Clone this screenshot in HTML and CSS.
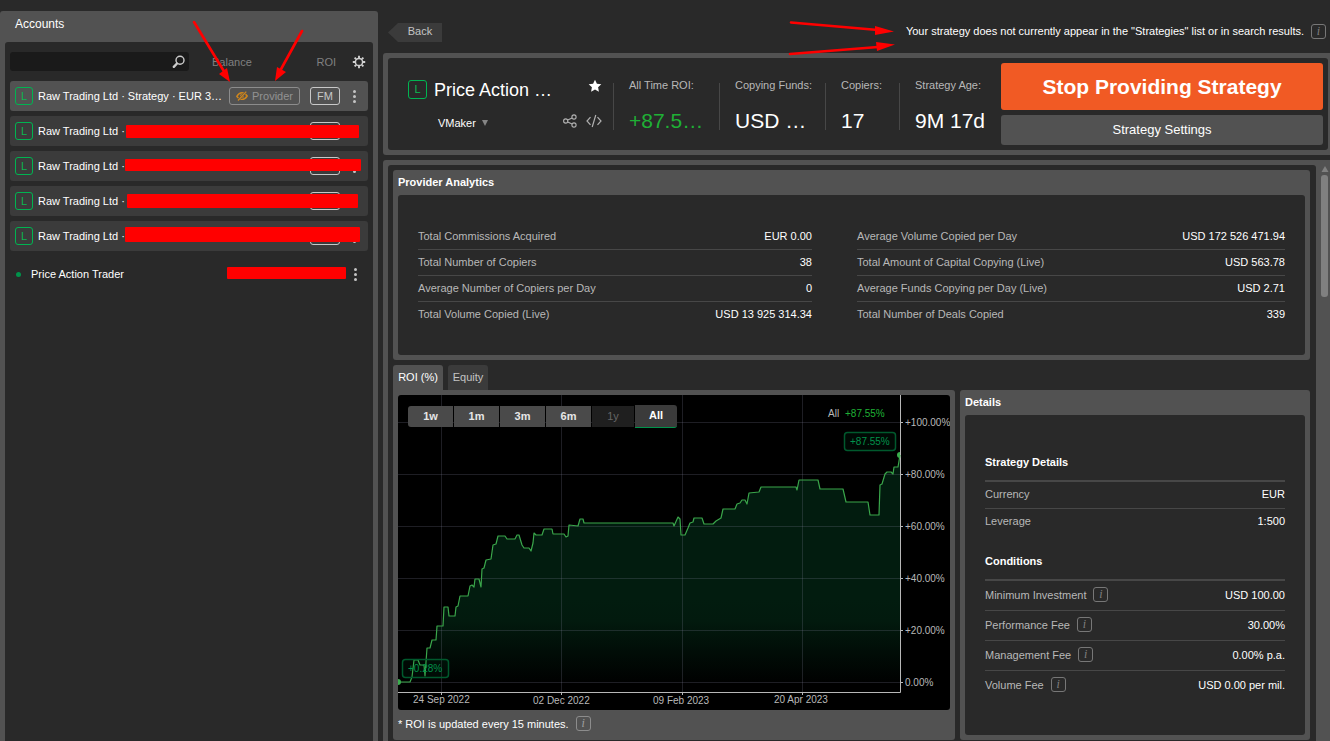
FILE: index.html
```html
<!DOCTYPE html>
<html lang="en">
<head>
<meta charset="utf-8">
<title>Strategy profile</title>
<link rel="stylesheet" href="styles.css">
</head>
<body>
<div class="app">
  <aside class="accounts">
    <h2 class="accounts-title">Accounts</h2>
    <div class="accounts-body">
      <div class="toolbar">
        <div class="search">
          <input class="search-input" type="text" aria-label="Search accounts">
          <svg class="search-icon" viewBox="0 0 14 14" aria-hidden="true"><circle cx="8" cy="5.3" r="4" fill="none" stroke="#ccc" stroke-width="1.4"/><path d="M5 8.5L1.8 11.8" stroke="#ccc" stroke-width="2.4" stroke-linecap="round"/></svg>
        </div>
        <span class="col-balance">Balance</span>
        <span class="col-roi">ROI</span>
        <button class="icon-btn" aria-label="Columns"><svg width="14" height="14" viewBox="0 0 14 14"><circle cx="7" cy="7" r="3.6" fill="none" stroke="#d0d0d0" stroke-width="1.5"/><path d="M7 3V.8M7 11v2.2M3 7H.8M11 7h2.2M4.2 4.2L2.6 2.6M9.8 4.2l1.6-1.6M4.2 9.8l-1.6 1.6M9.8 9.8l1.6 1.6" stroke="#d0d0d0" stroke-width="1.9"/></svg></button>
      </div>
      <ul class="account-list">
        <li class="account active">
          <span class="badge">L</span><span class="account-name">Raw Trading Ltd · Strategy · EUR 3…</span>
          <button class="tag provider"><svg width="12" height="10" viewBox="0 0 12 10" aria-hidden="true"><path d="M.8 5.3Q3 1.8 6 1.8T11.2 5Q9 8.4 6 8.4T.8 5.3z" fill="none" stroke="#d0861b" stroke-width="1.4"/><circle cx="6" cy="5" r="2.1" fill="#d0861b"/><path d="M1.6 9.6L10.6.5" stroke="#525252" stroke-width="2.4"/><path d="M2 9.5L10.3.6" stroke="#d0861b" stroke-width="1.3"/></svg>Provider</button>
          <button class="tag fm">FM</button>
          <button class="dots" aria-label="More"><i></i><i></i><i></i></button>
        </li>
        <li class="account"><span class="badge">L</span><span class="account-name">Raw Trading Ltd ·</span><button class="tag fm">FM</button><button class="dots" aria-label="More"><i></i><i></i><i></i></button><span class="mask mask-a"></span></li>
        <li class="account"><span class="badge">L</span><span class="account-name">Raw Trading Ltd ·</span><button class="tag fm">FM</button><button class="dots" aria-label="More"><i></i><i></i><i></i></button><span class="mask mask-b"></span></li>
        <li class="account"><span class="badge">L</span><span class="account-name">Raw Trading Ltd ·</span><button class="tag fm">FM</button><button class="dots" aria-label="More"><i></i><i></i><i></i></button><span class="mask mask-c"></span></li>
        <li class="account"><span class="badge">L</span><span class="account-name">Raw Trading Ltd ·</span><button class="tag fm">FM</button><button class="dots" aria-label="More"><i></i><i></i><i></i></button><span class="mask mask-d"></span></li>
        <li class="trader"><span class="status"></span><span class="account-name">Price Action Trader</span><button class="dots" aria-label="More"><i></i><i></i><i></i></button><span class="mask mask-e"></span></li>
      </ul>
    </div>
  </aside>

  <main class="main">
    <div class="topbar">
      <button class="back">Back</button>
      <p class="notice">Your strategy does not currently appear in the "Strategies" list or in search results. <span class="info">i</span></p>
    </div>

    <header class="summary">
      <div class="summary-body">
        <div class="identity">
          <div class="identity-row">
            <span class="badge badge-lg">L</span>
            <h1 class="strategy-name">Price Action …</h1>
            <button class="icon-btn" aria-label="Favourite"><svg width="14" height="14" viewBox="0 0 14 14"><path d="M7 .8l1.9 4 4.4.5-3.2 3 .8 4.5L7 10.6l-3.9 2.2.8-4.5-3.2-3 4.4-.5z" fill="#fff"/></svg></button>
          </div>
          <div class="identity-row owner-row">
            <button class="owner">VMaker <svg width="6" height="6" viewBox="0 0 6 6" aria-hidden="true"><path d="M0 0h6L3 6z" fill="#858585"/></svg></button>
            <button class="icon-btn" aria-label="Share"><svg width="14" height="14" viewBox="0 0 14 14" fill="none" stroke="#b0b0b0" stroke-width="1.1"><circle cx="2.7" cy="7" r="2.1"/><circle cx="11" cy="3" r="2.1"/><circle cx="11" cy="11" r="2.1"/><path d="M4.7 6l4.4-2M4.7 8l4.4 2"/></svg></button>
            <button class="icon-btn" aria-label="Embed"><svg width="16" height="14" viewBox="0 0 16 14" fill="none" stroke="#b0b0b0" stroke-width="1.2"><path d="M4.5 3.2L1 7l3.500 3.800M11.500 3.200L15 7l-3.500 3.800M9.800 1L6.200 13"/></svg></button>
          </div>
        </div>
        <dl class="stats">
          <div class="stat"><dt>All Time ROI:</dt><dd class="gain">+87.5…</dd></div>
          <div class="stat"><dt>Copying Funds:</dt><dd>USD …</dd></div>
          <div class="stat stat-narrow"><dt>Copiers:</dt><dd>17</dd></div>
          <div class="stat"><dt>Strategy Age:</dt><dd>9M 17d</dd></div>
        </dl>
        <div class="actions">
          <button class="stop">Stop Providing Strategy</button>
          <button class="settings">Strategy Settings</button>
        </div>
      </div>
    </header>

    <div class="scroller">
      <div class="content">
        <section class="panel">
          <h3 class="panel-title">Provider Analytics</h3>
          <div class="panel-body analytics">
            <dl class="rows">
              <div class="row"><dt>Total Commissions Acquired</dt><dd>EUR 0.00</dd></div>
              <div class="row"><dt>Total Number of Copiers</dt><dd>38</dd></div>
              <div class="row"><dt>Average Number of Copiers per Day</dt><dd>0</dd></div>
              <div class="row"><dt>Total Volume Copied (Live)</dt><dd>USD 13 925 314.34</dd></div>
            </dl>
            <dl class="rows">
              <div class="row"><dt>Average Volume Copied per Day</dt><dd>USD 172 526 471.94</dd></div>
              <div class="row"><dt>Total Amount of Capital Copying (Live)</dt><dd>USD 563.78</dd></div>
              <div class="row"><dt>Average Funds Copying per Day (Live)</dt><dd>USD 2.71</dd></div>
              <div class="row"><dt>Total Number of Deals Copied</dt><dd>339</dd></div>
            </dl>
          </div>
        </section>

        <div class="lower">
          <section class="performance">
            <div class="tabs">
              <button class="tab tab-on">ROI (%)</button>
              <button class="tab">Equity</button>
            </div>
            <div class="chart-panel">
              <div class="chart">
                <svg class="plot" viewBox="398 395 552 315" role="img" aria-label="ROI over time">
                  <defs><linearGradient id="fade" gradientUnits="userSpaceOnUse" x1="0" y1="600" x2="0" y2="684"><stop offset="0" stop-color="#021c0f"/><stop offset=".25" stop-color="#021a0e"/><stop offset="1" stop-color="#000"/></linearGradient></defs>
                  <path class="area" fill="url(#fade)" d="M398 682H410L412 677L414 660H418L420 665H424L425 676L427 648H430L432 640H436L437 626H443L444 607H448L449 616H455L456 607L458 606L460 596H468L470 586L472 585L474 587L475 579H479L481 587L482 569L484 568L486 560L491 559L493 545L496 544L498 536H505L507 539H515L517 535H519L522 545L524 548H529L531 551L533 543L534 533L536 535H542L544 529H552L553 534H564L566 537L568 536L569 525L578 526L580 519H583L584 523H673L674 526L678 517L680 519L681 535H685L688 528L690 523L693 522L694 518H702L704 524H713L716 521L721 518L723 509H735L737 504L740 503L742 500H745L747 504L749 493L759 492L761 487H796L797 490L799 480H818L820 489H843L846 502H868L870 515H879L880 485L882 484L885 474L887 472H891L893 474L894 467H898L900 455V684H398z"/>
                  <path class="grid" d="M398 422.500H900M398 474.500H900M398 526.500H900M398 578.500H900M398 630.500H900M398 682.500H900M441.500 395V692M561.500 395V692M682.500 395V692M802.500 395V692"/>
                  <path class="axis" d="M900.500 395V692.500H398M900 422.500h3M900 474.500h3M900 526.500h3M900 578.500h3M900 630.500h3M900 682.500h3M441.500 692v3M561.500 692v3M682.500 692v3M802.500 692v3"/>
                  <path class="line" d="M398 682H410L412 677L414 660H418L420 665H424L425 676L427 648H430L432 640H436L437 626H443L444 607H448L449 616H455L456 607L458 606L460 596H468L470 586L472 585L474 587L475 579H479L481 587L482 569L484 568L486 560L491 559L493 545L496 544L498 536H505L507 539H515L517 535H519L522 545L524 548H529L531 551L533 543L534 533L536 535H542L544 529H552L553 534H564L566 537L568 536L569 525L578 526L580 519H583L584 523H673L674 526L678 517L680 519L681 535H685L688 528L690 523L693 522L694 518H702L704 524H713L716 521L721 518L723 509H735L737 504L740 503L742 500H745L747 504L749 493L759 492L761 487H796L797 490L799 480H818L820 489H843L846 502H868L870 515H879L880 485L882 484L885 474L887 472H891L893 474L894 467H898L900 455"/>
                  <path d="M398 679a3 3 0 0 1 0 6z M900 452a3 3 0 0 0 0 6z" fill="#3aad4d"/>
                  <g class="callout"><rect x="402.500" y="659.500" width="46" height="18" rx="3"/><text x="408" y="672">+0.28%</text><rect x="844.500" y="432.500" width="51" height="18" rx="3"/><text x="850" y="445">+87.55%</text></g>
                  <g class="labels">
                    <text x="905" y="426">+100.00%</text><text x="905" y="478">+80.00%</text><text x="905" y="530">+60.00%</text><text x="905" y="582">+40.00%</text><text x="905" y="634">+20.00%</text><text x="905" y="686">0.00%</text>
                    <text x="413" y="703">24 Sep 2022</text><text x="533" y="704">02 Dec 2022</text><text x="653" y="704">09 Feb 2023</text><text x="774" y="703">20 Apr 2023</text>
                    <text x="828" y="417">All</text><text class="total" x="845" y="417">+87.55%</text>
                  </g>
                </svg>
                <div class="ranges">
                  <button class="range">1w</button><button class="range">1m</button><button class="range">3m</button><button class="range">6m</button><button class="range range-off" disabled>1y</button><button class="range range-on">All</button>
                </div>
              </div>
              <p class="note">* ROI is updated every 15 minutes. <span class="info">i</span></p>
            </div>
          </section>

          <section class="panel details">
            <h3 class="panel-title">Details</h3>
            <div class="panel-body details-body">
              <h4 class="group-title">Strategy Details</h4>
              <dl class="rows">
                <div class="row"><dt>Currency</dt><dd>EUR</dd></div>
                <div class="row"><dt>Leverage</dt><dd>1:500</dd></div>
              </dl>
              <h4 class="group-title">Conditions</h4>
              <dl class="rows rows-tall">
                <div class="row"><dt>Minimum Investment <span class="info">i</span></dt><dd>USD 100.00</dd></div>
                <div class="row"><dt>Performance Fee <span class="info">i</span></dt><dd>30.00%</dd></div>
                <div class="row"><dt>Management Fee <span class="info">i</span></dt><dd>0.00% p.a.</dd></div>
                <div class="row"><dt>Volume Fee <span class="info">i</span></dt><dd>USD 0.00 per mil.</dd></div>
              </dl>
            </div>
          </section>
        </div>
      </div>
      <div class="scrollbar"><svg width="8" height="8" viewBox="0 0 8 8" aria-hidden="true"><path d="M4 1l3.500 6H.5z" fill="#808080"/></svg><div class="thumb"></div></div>
    </div>
  </main>
</div>
<svg class="arrows" width="900" height="90" viewBox="0 0 900 90" aria-hidden="true">
  <g stroke="#f00" stroke-width="2.600" stroke-linecap="round"><path d="M194 22L225 73M302 31L280 71M791 22.500L878 30M790 54L878 47"/></g>
  <path d="M230 82L219 74L227 68zM275 81L277 67L286 72zM894 31.500L875 35V26zM895 44.500L877 51L876 42z" fill="#f00"/>
</svg>
</body>
</html>
```
FILE: styles.css
```css
* { box-sizing: border-box; }
body, h1, h2, h3, h4, p, ul, dl, dd { margin: 0; padding: 0; }
body {
  background: #292929;
  color: #fff;
  font: 11px/14px "Liberation Sans", Arial, sans-serif;
  overflow: hidden;
}
button { border: 0; padding: 0; background: none; color: inherit; font: inherit; cursor: pointer; }
svg { display: block; flex: none; }
ul { list-style: none; }

.app { display: flex; height: 100vh; gap: 5px; }

/* Accounts sidebar */
.accounts {
  display: flex; flex-direction: column; flex: 0 0 378px; min-width: 0;
  margin-top: 11px; padding: 0 5px;
  background: #525252; border-radius: 3px 3px 0 0;
}
.accounts-title { padding: 6px 10px 11px; font-size: 12px; line-height: 14px; font-weight: 400; }
.accounts-body { flex: 1; padding: 10px 5px; background: #292929; border-radius: 3px 3px 0 0; }
.toolbar { display: flex; align-items: center; height: 19px; margin-bottom: 10px; color: #808080; }
.search { position: relative; width: 179px; height: 19px; }
.search-input { width: 100%; height: 100%; padding: 0 24px 0 6px; border: 0; border-radius: 3px; background: #1a1a1a; color: #fff; font: inherit; }
.search-icon { position: absolute; right: 3px; top: 3px; width: 14px; height: 14px; }
.col-balance { margin-left: 23px; flex: 1; }
.col-roi { margin-right: 16px; }
.toolbar .icon-btn { margin-right: 2px; }
.account-list { display: flex; flex-direction: column; gap: 5px; }
.account, .trader { position: relative; display: flex; align-items: center; height: 30px; padding: 0 5px; border-radius: 3px; }
.account { background: #3b3b3b; }
.account.active { background: #525252; }
.trader { margin-top: 3px; padding-right: 4px; }
.account-name { flex: 1; min-width: 0; white-space: nowrap; margin-left: 5px; }
.trader .account-name { margin-left: 10px; }
.badge { width: 18px; height: 18px; flex: none; border: 1px solid #00b451; border-radius: 3px; color: #0cb850; line-height: 17px; text-align: center; }
.tag { flex: none; height: 18px; margin-left: 10px; border: 1px solid #c8c8c8; border-radius: 3px; color: #c8c8c8; }
.fm { width: 30px; }
.provider { display: flex; align-items: center; justify-content: center; gap: 4px; width: 71px; border-color: #8c8c8c; color: #929292; }
.dots { display: flex; flex: none; flex-direction: column; align-items: center; gap: 2px; width: 8px; margin: 0 5px 0 10px; }
.dots i { width: 3px; height: 3px; border-radius: 50%; background: #c4c4c4; }
.status { width: 5px; height: 5px; margin-left: 1px; border-radius: 50%; background: #00934b; }
.mask { position: absolute; background: #f00; border-radius: 1px; }
.mask-a { left: 116px; right: 9px; top: 9px; height: 13px; }
.mask-b { left: 115px; right: 7px; top: 8px; height: 12px; }
.mask-c { left: 117px; right: 10px; top: 8px; height: 14px; }
.mask-d { left: 115px; right: 8px; top: 6px; height: 15px; }
.mask-e { left: 217px; right: 22px; top: 8px; height: 12px; }

/* Right column */
.main { display: flex; flex-direction: column; flex: 1; min-width: 0; }
.topbar { display: flex; justify-content: space-between; height: 53px; padding: 23px 4px 0 5px; }
.back { width: 54px; height: 19px; padding: 0 0 4px 10px; background: #3b3b3b; color: #c4c4c4; clip-path: polygon(0 50%, 10px 0, 100% 0, 100% 100%, 10px 100%); }
.notice { display: flex; align-items: center; height: 16px; }
.info {
  display: inline-block; width: 15px; height: 15px; margin-left: 7px;
  border: 1px solid #777; border-radius: 3px; color: #808080;
  font: italic 12px/12px "Liberation Serif", serif; text-align: center;
}
.summary { padding: 5px 2px 5px 5px; background: #525252; border-radius: 3px 0 0 3px; }
.summary-body { display: flex; padding: 5px 5px 5px 20px; background: #292929; border-radius: 3px; }
.identity { flex: 1 1 205px; padding: 17px 10px 0 0; }
.identity-row { display: flex; align-items: center; height: 19px; }
.owner-row { margin-top: 12px; gap: 8px; }
.badge-lg { width: 19px; height: 19px; }
.strategy-name { flex: 1; margin-left: 7px; font-size: 18px; line-height: 20px; font-weight: 400; white-space: nowrap; }
.owner { display: flex; align-items: center; gap: 6px; flex: 1; margin: 5px 0 0 30px; }
.identity .icon-btn { margin-right: 1px; }
.strategy-name + .icon-btn { margin-bottom: 8px; }
.stats { display: flex; padding-top: 20px; }
.stat { width: 106px; height: 47px; padding-left: 15px; border-left: 1px solid #474747; }
.stat-narrow { width: 74px; }
.stat:last-child { width: 102px; }
.stat dt { color: #b8b8b8; line-height: 5px; white-space: nowrap; }
.stat dd { margin-top: 21px; font-size: 21px; line-height: 24px; white-space: nowrap; }
.stat .gain { color: #1fb035; }
.actions { display: flex; flex-direction: column; gap: 5px; flex: 1 1 322px; }
.stop { height: 47px; border-radius: 3px; background: #f15a24; font-size: 21px; font-weight: 700; }
.settings { height: 30px; border-radius: 3px; background: #525252; font-size: 13px; }

.scroller { display: flex; flex: 1; min-height: 0; margin-top: 5px; padding: 5px 0 0 5px; background: #525252; border-radius: 3px 0 0 0; }
.content { flex: 1; min-width: 0; padding: 5px 6px 0 5px; background: #292929; border-radius: 3px 3px 0 0; }
.scrollbar { display: flex; flex-direction: column; gap: 2px; width: 14px; padding-left: 5px; }
.thumb { width: 7px; height: 122px; border-radius: 3px; background: #808080; }

.panel { padding: 0 5px 5px; background: #525252; border-radius: 3px; }
.panel-title { height: 25px; font-size: 11px; line-height: 25px; }
.panel-body { background: #292929; border-radius: 3px; }
.analytics { display: grid; grid-template-columns: 394fr 428fr; gap: 45px; height: 160px; padding: 29px 20px 0; }
.row { display: flex; align-items: center; justify-content: space-between; height: 27px; padding-bottom: 2px; border-bottom: 1px solid #474747; white-space: nowrap; }
.analytics .row { height: 26px; }
.row:last-child { border-bottom-color: transparent; }
.row dt { display: flex; align-items: center; color: #b8b8b8; }
.rows-tall .row { height: 30px; }

.lower { display: flex; gap: 5px; margin-top: 5px; }
.performance { flex: 1; min-width: 0; }
.tabs { display: flex; gap: 5px; height: 25px; }
.tab { width: 50px; padding-bottom: 2px; border-radius: 3px 3px 0 0; background: #3b3b3b; color: #c4c4c4; }
.tab:last-child { width: 40px; }
.tab-on { background: #525252; color: #fff; }
.chart-panel { padding: 5px 5px 8px; background: #525252; border-radius: 0 3px 3px 3px; }
.chart { position: relative; overflow: hidden; background: #000; border-radius: 3px; }
.plot { width: 100%; height: auto; }
.grid { fill: none; stroke: #80809c; stroke-opacity: .23; }
.axis { fill: none; stroke: #b8b8b8; }
.line { fill: none; stroke: #3aa64b; stroke-width: 1.2; stroke-linejoin: round; }
.labels text, .callout text { font: 10px "Liberation Sans", Arial, sans-serif; }
.labels { fill: #b8b8b8; }
.labels .total { fill: #1fb035; }
.callout rect { fill: #00934b; fill-opacity: .06; stroke: #00592d; stroke-width: 1.5; }
.callout text { fill: #00934b; }
.ranges { position: absolute; left: 10px; top: 10px; display: flex; align-items: center; gap: 1px; }
.range { width: 45px; height: 21px; padding-bottom: 2px; background: #4a4a4a; color: #e6e6e6; font-weight: 700; }
.range:first-child { border-radius: 3px 0 0 3px; }
.range:disabled { width: 42px; background: #1f1f1f; color: #666; font-weight: 400; }
.range-on { width: 42px; height: 23px; padding-bottom: 2px; border-bottom: 1px solid #00934b; border-radius: 0 3px 3px 0; background: #3b3b3b; color: #fff; }
.note { display: flex; align-items: center; height: 17px; margin-top: 5px; }
.note .info { border-color: #8c8c8c; color: #a0a0a0; }

.details { display: flex; flex-direction: column; flex: 0 0 350px; margin-top: 25px; }
.details-body { flex: 1; padding: 40px 20px 20px; }
.group-title { padding-bottom: 11px; border-bottom: 2px solid #474747; font-size: 11px; line-height: 14px; }
.rows + .group-title { margin-top: 18px; }

.arrows { position: absolute; left: 0; top: 0; pointer-events: none; }
```
